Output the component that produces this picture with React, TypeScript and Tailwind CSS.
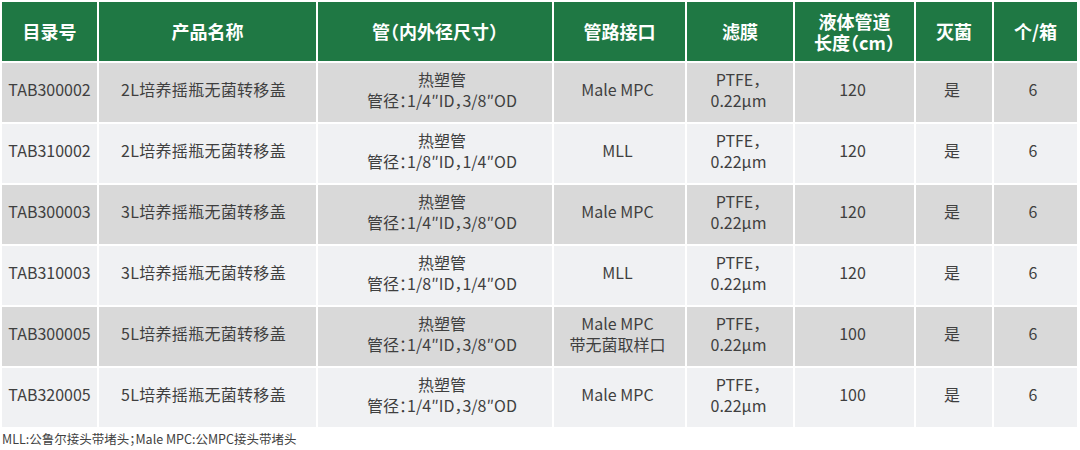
const headers: React.ReactNode[] = [
  "目录号",
  "产品名称",
  "管（内外径尺寸）",
  "管路接口",
  "滤膜",
  <>
    液体管道
    <br />
    长度（cm）
  </>,
  "灭菌",
  "个/箱",
];

type Row = {
  code: string;
  name: string;
  tube: string;
  port: string[];
  length: string;
};

const rows: Row[] = [
  { code: "TAB300002", name: "2L培养摇瓶无菌转移盖", tube: "管径：1/4″ID，3/8″OD", port: ["Male MPC"], length: "120" },
  { code: "TAB310002", name: "2L培养摇瓶无菌转移盖", tube: "管径：1/8″ID，1/4″OD", port: ["MLL"], length: "120" },
  { code: "TAB300003", name: "3L培养摇瓶无菌转移盖", tube: "管径：1/4″ID，3/8″OD", port: ["Male MPC"], length: "120" },
  { code: "TAB310003", name: "3L培养摇瓶无菌转移盖", tube: "管径：1/8″ID，1/4″OD", port: ["MLL"], length: "120" },
  { code: "TAB300005", name: "5L培养摇瓶无菌转移盖", tube: "管径：1/4″ID，3/8″OD", port: ["Male MPC", "带无菌取样口"], length: "100" },
  { code: "TAB320005", name: "5L培养摇瓶无菌转移盖", tube: "管径：1/4″ID，3/8″OD", port: ["Male MPC"], length: "100" },
];

const font = { fontFamily: '"Noto Sans CJK SC", "Noto Sans", sans-serif' };

export default function App() {
  return (
    <div
      className="w-[1080px] h-[450px] bg-white pt-[2px] pl-[2px] [font-feature-settings:'halt']"
      style={font}
    >
      <div className="grid grid-cols-[95px_217px_234px_131px_106px_119px_76px_83px] gap-[2px]">
        {headers.map((h, i) => (
          <div
            key={i}
            className="h-[59px] bg-[#1f7844] text-white font-bold text-[18px] leading-[21px] flex items-center justify-center text-center"
          >
            <span>{h}</span>
          </div>
        ))}
        {rows.map((r, i) => {
          const bg = i % 2 === 0 ? "bg-[#d9d9d9]" : "bg-[#f0f1f3]";
          const cell = `h-[59px] ${bg} pb-[6px] text-[#3f3f3f] text-[16px] leading-[21px] flex flex-col items-center justify-center text-center`;
          return (
            <div key={r.code} className="contents">
              <div className={cell}>{r.code}</div>
              <div className={`${cell} pr-[8px]`}>
                <span className="tracking-[0.3px]">{r.name}</span>
              </div>
              <div className={`${cell} pl-[14px]`}>
                <span>热塑管</span>
                <span>{r.tube}</span>
              </div>
              <div className={`${cell} pr-[4px]`}>
                {r.port.map((p) => (
                  <span key={p}>{p}</span>
                ))}
              </div>
              <div className={`${cell} pr-[3px]`}>
                <span>PTFE，</span>
                <span>0.22μm</span>
              </div>
              <div className={`${cell} pr-[4px]`}>{r.length}</div>
              <div className={`${cell} pr-[4px]`}>是</div>
              <div className={`${cell} pr-[5px]`}>6</div>
            </div>
          );
        })}
      </div>
      <div className="mt-[3px] text-[12.5px] leading-[18px] text-[#3f3f3f]">
        MLL:公鲁尔接头带堵头；Male MPC:公MPC接头带堵头
      </div>
    </div>
  );
}
